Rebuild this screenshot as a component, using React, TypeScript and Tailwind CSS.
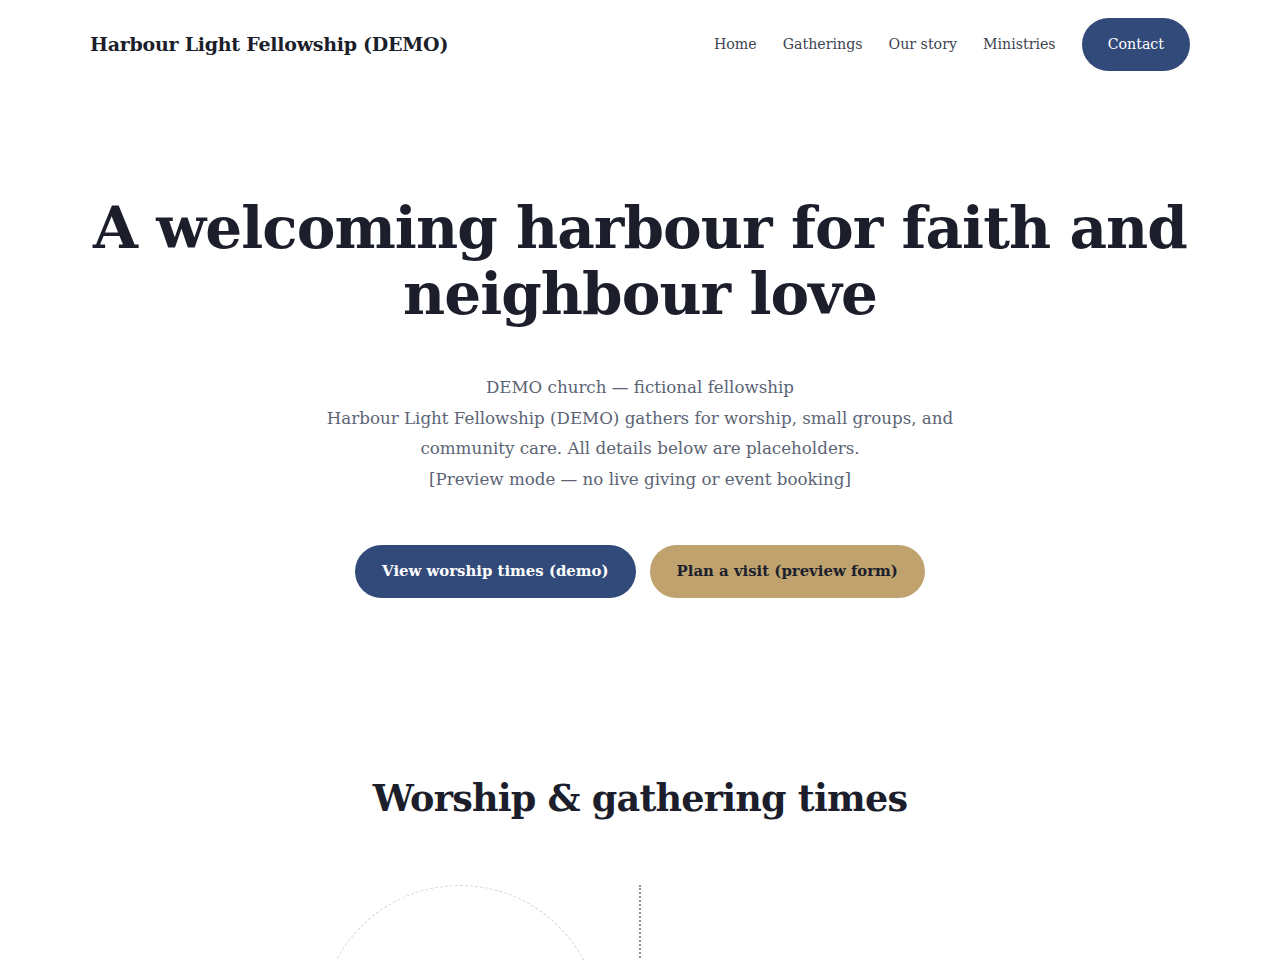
import React from "react";

const navLinks = ["Home", "Gatherings", "Our story", "Ministries"];

export default function App() {
  return (
    <main className="min-h-screen bg-white font-['DejaVu_Serif',serif] text-[#1c1f2b]">
      {/* header */}
      <header className="mx-auto flex max-w-[1100px] items-center justify-between py-[18px]">
        <a href="#" className="text-[19px] font-bold tracking-[-0.25px] text-[#1c1f2b]">
          Harbour Light Fellowship (DEMO)
        </a>
        <nav className="flex items-center gap-[26px] text-[14.2px] text-[#3d4352]">
          {navLinks.map((l) => (
            <a key={l} href="#">
              {l}
            </a>
          ))}
          <a
            href="#"
            className="flex h-[53px] items-center rounded-full bg-[#324a7a] px-[26px] text-white"
          >
            Contact
          </a>
        </nav>
      </header>

      {/* hero */}
      <section className="mx-auto max-w-[1100px] pt-[106px] text-center">
        <h1 className="text-[58px] font-bold leading-[66px] tracking-[-0.95px] text-[#1c1f2b]">
          A welcoming harbour for faith and neighbour love
        </h1>
        <div className="mx-auto mt-[45px] max-w-[640px] text-[16.7px] leading-[30.7px] text-[#5b6475]">
          <p>DEMO church — fictional fellowship</p>
          <p>
            Harbour Light Fellowship (DEMO) gathers for worship, small groups, and
            community care. All details below are placeholders.
          </p>
          <p>[Preview mode — no live giving or event booking]</p>
        </div>
        <div className="mt-[50px] flex justify-center gap-[14px]">
          <a
            href="#"
            className="flex h-[53px] items-center rounded-full bg-[#324a7a] px-[27px] text-[14.9px] font-bold text-white"
          >
            View worship times (demo)
          </a>
          <a
            href="#"
            className="flex h-[53px] items-center rounded-full bg-[#bfa26e] px-[27px] text-[14.9px] font-bold text-[#1c1f2b]"
          >
            Plan a visit (preview form)
          </a>
        </div>
      </section>

      {/* worship times */}
      <section className="mx-auto max-w-[1100px] pt-[177px] text-center">
        <h2 className="text-[36.6px] font-bold leading-[48px] tracking-[-0.8px] text-[#1c1f2b]">
          Worship &amp; gathering times
        </h2>
        <div className="mx-auto mt-[62px] grid max-w-[640px] grid-cols-2">
          <div className="flex justify-end pr-[40px]">
            <div className="h-[290px] w-[290px] rounded-full border border-dashed border-[#cfd3da]" />
          </div>
          <div className="-ml-px h-[300px] border-l-2 border-dotted border-[#8a8f99]" />
        </div>
      </section>
    </main>
  );
}
